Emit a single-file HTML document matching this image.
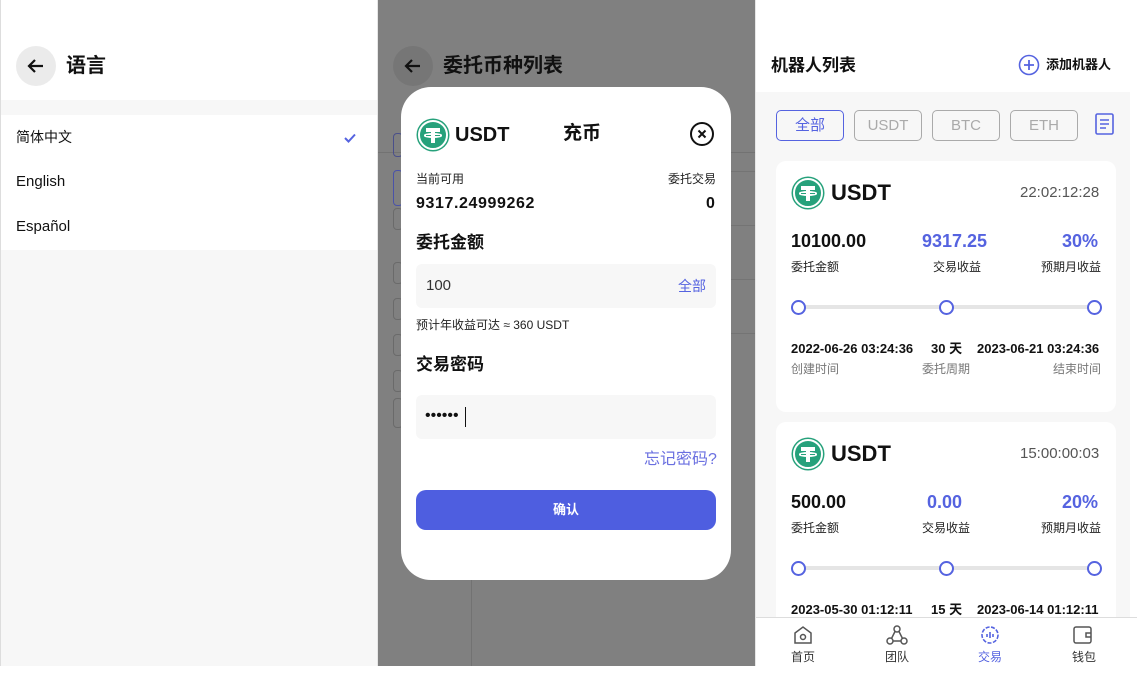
<!DOCTYPE html>
<html><head><meta charset="utf-8"><style>
*{margin:0;padding:0;box-sizing:border-box}
body{width:1137px;height:666px;position:relative;overflow:hidden;background:#fff;font-family:"Liberation Sans","Noto Sans CJK SC",sans-serif;color:#111}
.abs{position:absolute;line-height:1.2}
.tether{position:absolute;border-radius:50%;background:#26a17b;border:2px solid #fff;box-shadow:0 0 0 1.5px #26a17b}
.tether:before{content:"";position:absolute;left:22%;right:22%;top:24%;height:13%;background:#fff}
.tether:after{content:"";position:absolute;left:42%;width:16%;top:30%;bottom:18%;background:#fff}
.tether i{position:absolute;left:14%;right:14%;top:44%;height:16%;border:2px solid #fff;border-radius:50%}
.d{font-size:13px;font-weight:bold}
</style></head><body>
<!-- left panel -->
<div class="abs" style="left:0;top:0;width:378px;height:666px;background:#f7f7f7;border-left:1px solid #ddd;border-right:1px solid #e6e6e6"></div>
<div class="abs" style="left:1px;top:0;width:376px;height:100px;background:#fff"></div>
<div class="abs" style="left:16px;top:46px;width:40px;height:40px;border-radius:50%;background:#ebebeb"></div>
<svg class="abs" style="left:24px;top:54px" width="24" height="24" viewBox="0 0 24 24"><path d="M19 12H5M11 6l-6 6 6 6" stroke="#111" stroke-width="2.2" fill="none"/></svg>
<div class="abs" style="left:66px;top:54px;font-size:20px;font-weight:bold">语言</div>
<div class="abs" style="left:1px;top:115px;width:376px;height:135px;background:#fff"></div>
<div class="abs" style="left:16px;top:129px;font-size:14px">简体中文</div>
<svg class="abs" style="left:343px;top:131px" width="14" height="14" viewBox="0 0 14 14"><path d="M2 7l3.5 3.5L12 3.5" stroke="#5563e0" stroke-width="2" fill="none"/></svg>
<div class="abs" style="left:16px;top:173px;font-size:15px">English</div>
<div class="abs" style="left:16px;top:218px;font-size:15px">Español</div>

<!-- middle panel -->
<div class="abs" style="left:378px;top:0;width:377px;height:666px;background:#808080"></div>
<div class="abs" style="left:393px;top:46px;width:40px;height:40px;border-radius:50%;background:#767676"></div>
<svg class="abs" style="left:401px;top:54px" width="24" height="24" viewBox="0 0 24 24"><path d="M19 12H5M11 6l-6 6 6 6" stroke="#111" stroke-width="2.2" fill="none"/></svg>
<div class="abs" style="left:443px;top:54px;font-size:20px;font-weight:bold;color:#111">委托币种列表</div>
<div class="abs" style="left:378px;top:152px;width:377px;height:1px;background:#727272"></div>
<div class="abs" style="left:471px;top:153px;width:1px;height:513px;background:#727272"></div>
<div class="abs" style="left:393px;top:133px;width:10px;height:24px;border:1px solid #4a4f8a;border-radius:4px"></div>
<div class="abs" style="left:393px;top:170px;width:10px;height:36px;border:1px solid #4a52a8;border-radius:4px"></div>
<div class="abs" style="left:393px;top:208px;width:10px;height:22px;border:1px solid #6a6a6a;border-radius:4px"></div>
<div class="abs" style="left:393px;top:262px;width:10px;height:22px;border:1px solid #6a6a6a;border-radius:4px"></div>
<div class="abs" style="left:393px;top:298px;width:10px;height:22px;border:1px solid #6a6a6a;border-radius:4px"></div>
<div class="abs" style="left:393px;top:334px;width:10px;height:22px;border:1px solid #6a6a6a;border-radius:4px"></div>
<div class="abs" style="left:393px;top:370px;width:10px;height:22px;border:1px solid #6a6a6a;border-radius:4px"></div>
<div class="abs" style="left:393px;top:398px;width:10px;height:30px;border:1px solid #6a6a6a;border-radius:4px"></div>
<div class="abs" style="left:731px;top:171px;width:24px;height:1px;background:#747474"></div>
<div class="abs" style="left:731px;top:225px;width:24px;height:1px;background:#747474"></div>
<div class="abs" style="left:731px;top:279px;width:24px;height:1px;background:#747474"></div>
<div class="abs" style="left:731px;top:333px;width:24px;height:1px;background:#747474"></div>

<!-- modal -->
<div class="abs" style="left:401px;top:87px;width:330px;height:493px;background:#fff;border-radius:30px"></div>
<div class="tether" style="left:418px;top:120px;width:30px;height:30px"><i></i></div>
<div class="abs" style="left:455px;top:123px;font-size:20px;font-weight:bold">USDT</div>
<div class="abs" style="left:563px;top:123px;font-size:19px;font-weight:bold">充币</div>
<svg class="abs" style="left:689px;top:121px" width="26" height="26" viewBox="0 0 26 26"><circle cx="13" cy="13" r="11" stroke="#111" stroke-width="2" fill="none"/><path d="M9.5 9.5l7 7M16.5 9.5l-7 7" stroke="#111" stroke-width="2"/></svg>
<div class="abs" style="left:416px;top:172px;font-size:12px;color:#222">当前可用</div>
<div class="abs" style="left:668px;top:172px;font-size:12px;color:#222">委托交易</div>
<div class="abs" style="left:416px;top:194px;font-size:16px;font-weight:bold;letter-spacing:0.6px">9317.24999262</div>
<div class="abs" style="left:706px;top:194px;font-size:16px;font-weight:bold">0</div>
<div class="abs" style="left:416px;top:233px;font-size:17px;font-weight:bold">委托金额</div>
<div class="abs" style="left:416px;top:264px;width:300px;height:44px;background:#f7f7f7;border-radius:6px"></div>
<div class="abs" style="left:426px;top:277px;font-size:15px;color:#333">100</div>
<div class="abs" style="left:678px;top:278px;font-size:14px;color:#5563e0">全部</div>
<div class="abs" style="left:416px;top:318px;font-size:12px;color:#222">预计年收益可达 ≈ 360 USDT</div>
<div class="abs" style="left:416px;top:355px;font-size:17px;font-weight:bold">交易密码</div>
<div class="abs" style="left:416px;top:395px;width:300px;height:44px;background:#f7f7f7;border-radius:6px"></div>
<div class="abs" style="left:425px;top:406px;font-size:16px;letter-spacing:0px">••••••</div>
<div class="abs" style="left:465px;top:407px;width:1px;height:20px;background:#111"></div>
<div class="abs" style="left:644px;top:450px;font-size:16px;color:#6a6fe0">忘记密码?</div>
<div class="abs" style="left:416px;top:490px;width:300px;height:40px;background:#4e5ee0;border-radius:10px;color:#fff;font-size:13px;font-weight:bold;text-align:center;line-height:40px">确认</div>

<!-- right panel -->
<div class="abs" style="left:755px;top:0;width:382px;height:666px;background:#f7f7f7;border-left:1px solid #e6e6e6"></div>
<div class="abs" style="left:756px;top:0;width:374px;height:92px;background:#fff"></div>
<div class="abs" style="left:1130px;top:0;width:7px;height:666px;background:#fff"></div>
<div class="abs" style="left:771px;top:56px;font-size:17px;font-weight:bold">机器人列表</div>
<svg class="abs" style="left:1018px;top:54px" width="22" height="22" viewBox="0 0 22 22"><circle cx="11" cy="11" r="9.5" stroke="#5563e0" stroke-width="1.6" fill="none"/><path d="M11 6v10M6 11h10" stroke="#5563e0" stroke-width="1.8"/></svg>
<div class="abs" style="left:1046px;top:57px;font-size:13px;font-weight:bold">添加机器人</div>
<div class="abs" style="left:776px;top:110px;width:68px;height:31px;border:1px solid #5563e0;border-radius:5px;color:#5563e0;font-size:15px;text-align:center;line-height:29px">全部</div>
<div class="abs" style="left:854px;top:110px;width:68px;height:31px;border:1px solid #aaa;border-radius:5px;color:#aaa;font-size:15px;text-align:center;line-height:29px">USDT</div>
<div class="abs" style="left:932px;top:110px;width:68px;height:31px;border:1px solid #aaa;border-radius:5px;color:#aaa;font-size:15px;text-align:center;line-height:29px">BTC</div>
<div class="abs" style="left:1010px;top:110px;width:68px;height:31px;border:1px solid #aaa;border-radius:5px;color:#aaa;font-size:15px;text-align:center;line-height:29px">ETH</div>
<svg class="abs" style="left:1095px;top:113px" width="19" height="22" viewBox="0 0 19 22"><rect x="1" y="1" width="17" height="20" rx="1.5" stroke="#5563e0" stroke-width="1.6" fill="none"/><path d="M5 7h9M5 11h9M5 15h6" stroke="#5563e0" stroke-width="1.6"/></svg>

<div class="abs" style="left:776px;top:161px;width:340px;height:251px;background:#fff;border-radius:10px"></div>
<div class="tether" style="left:793px;top:178px;width:30px;height:30px"><i></i></div>
<div class="abs" style="left:831px;top:180px;font-size:22px;font-weight:bold">USDT</div>
<div class="abs" style="left:1020px;top:184px;font-size:15px;color:#555">22:02:12:28</div>
<div class="abs" style="left:791px;top:231px;font-size:18px;font-weight:bold">10100.00</div>
<div class="abs" style="left:922px;top:231px;font-size:18px;font-weight:bold;color:#5563e0">9317.25</div>
<div class="abs" style="left:1062px;top:231px;font-size:18px;font-weight:bold;color:#5563e0">30%</div>
<div class="abs" style="left:791px;top:260px;font-size:12px;color:#222">委托金额</div>
<div class="abs" style="left:933px;top:260px;font-size:12px;color:#222">交易收益</div>
<div class="abs" style="left:1041px;top:260px;font-size:12px;color:#222">预期月收益</div>
<div class="abs" style="left:798px;top:305px;width:296px;height:4px;background:#e5e5e5"></div>
<div class="abs" style="left:791px;top:300px;width:15px;height:15px;border:2px solid #5563e0;border-radius:50%;background:#fff"></div>
<div class="abs" style="left:939px;top:300px;width:15px;height:15px;border:2px solid #5563e0;border-radius:50%;background:#fff"></div>
<div class="abs" style="left:1087px;top:300px;width:15px;height:15px;border:2px solid #5563e0;border-radius:50%;background:#fff"></div>
<div class="abs d" style="left:791px;top:341px">2022-06-26 03:24:36</div>
<div class="abs d" style="left:931px;top:341px">30 天</div>
<div class="abs d" style="left:977px;top:341px">2023-06-21 03:24:36</div>
<div class="abs" style="left:791px;top:362px;font-size:12px;color:#777">创建时间</div>
<div class="abs" style="left:922px;top:362px;font-size:12px;color:#777">委托周期</div>
<div class="abs" style="left:1053px;top:362px;font-size:12px;color:#777">结束时间</div>

<div class="abs" style="left:776px;top:422px;width:340px;height:251px;background:#fff;border-radius:10px"></div>
<div class="tether" style="left:793px;top:439px;width:30px;height:30px"><i></i></div>
<div class="abs" style="left:831px;top:441px;font-size:22px;font-weight:bold">USDT</div>
<div class="abs" style="left:1020px;top:445px;font-size:15px;color:#555">15:00:00:03</div>
<div class="abs" style="left:791px;top:492px;font-size:18px;font-weight:bold">500.00</div>
<div class="abs" style="left:927px;top:492px;font-size:18px;font-weight:bold;color:#5563e0">0.00</div>
<div class="abs" style="left:1062px;top:492px;font-size:18px;font-weight:bold;color:#5563e0">20%</div>
<div class="abs" style="left:791px;top:521px;font-size:12px;color:#222">委托金额</div>
<div class="abs" style="left:922px;top:521px;font-size:12px;color:#222">交易收益</div>
<div class="abs" style="left:1041px;top:521px;font-size:12px;color:#222">预期月收益</div>
<div class="abs" style="left:798px;top:566px;width:296px;height:4px;background:#e5e5e5"></div>
<div class="abs" style="left:791px;top:561px;width:15px;height:15px;border:2px solid #5563e0;border-radius:50%;background:#fff"></div>
<div class="abs" style="left:939px;top:561px;width:15px;height:15px;border:2px solid #5563e0;border-radius:50%;background:#fff"></div>
<div class="abs" style="left:1087px;top:561px;width:15px;height:15px;border:2px solid #5563e0;border-radius:50%;background:#fff"></div>
<div class="abs d" style="left:791px;top:602px">2023-05-30 01:12:11</div>
<div class="abs d" style="left:931px;top:602px">15 天</div>
<div class="abs d" style="left:977px;top:602px">2023-06-14 01:12:11</div>

<!-- tab bar -->
<div class="abs" style="left:756px;top:617px;width:381px;height:49px;background:#fff;border-top:1px solid #ddd"></div>
<svg class="abs" style="left:792px;top:624px" width="22" height="22" viewBox="0 0 22 22"><path d="M3 9L11 3l8 6v10H3z" stroke="#555" stroke-width="1.5" fill="none"/><circle cx="11" cy="13" r="2.5" stroke="#555" stroke-width="1.5" fill="none"/></svg>
<div class="abs" style="left:791px;top:650px;font-size:12px;color:#333">首页</div>
<svg class="abs" style="left:885px;top:624px" width="24" height="22" viewBox="0 0 24 22"><circle cx="12" cy="5" r="3" stroke="#555" stroke-width="1.5" fill="none"/><circle cx="5" cy="17" r="3" stroke="#555" stroke-width="1.5" fill="none"/><circle cx="19" cy="17" r="3" stroke="#555" stroke-width="1.5" fill="none"/><path d="M10 7.5L6.5 14.5M14 7.5l3.5 7M8 17h8" stroke="#555" stroke-width="1.5"/></svg>
<div class="abs" style="left:885px;top:650px;font-size:12px;color:#333">团队</div>
<svg class="abs" style="left:979px;top:624px" width="22" height="22" viewBox="0 0 22 22"><circle cx="11" cy="11" r="8" stroke="#5563e0" stroke-width="1.6" fill="none" stroke-dasharray="4 1.5"/><path d="M8 10v3M11 8v6M14 10v3" stroke="#5563e0" stroke-width="1.6"/></svg>
<div class="abs" style="left:978px;top:650px;font-size:12px;color:#5563e0">交易</div>
<svg class="abs" style="left:1072px;top:624px" width="22" height="22" viewBox="0 0 22 22"><rect x="2" y="3" width="17" height="16" rx="2" stroke="#555" stroke-width="1.5" fill="none"/><path d="M19 9h-5v4h5" stroke="#555" stroke-width="1.5" fill="none"/></svg>
<div class="abs" style="left:1072px;top:650px;font-size:12px;color:#333">钱包</div>
</body></html>
